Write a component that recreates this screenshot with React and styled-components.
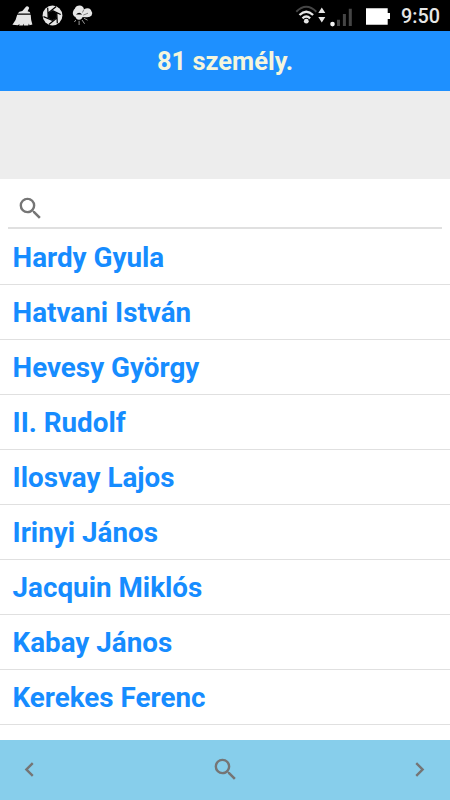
import React, { useState } from 'react';
import styled, { createGlobalStyle } from 'styled-components';
import { MdSearch, MdChevronLeft, MdChevronRight } from 'react-icons/md';

const GlobalStyle = createGlobalStyle`
    * {
        box-sizing: border-box;
    }
    body {
        margin: 0;
        background: #fff;
        font-family: Roboto, "Liberation Sans", sans-serif;
    }
`;

const Screen = styled.div`
    display: flex;
    flex-direction: column;
    height: 800px;
    width: 450px;
    overflow: hidden;
    background: #fff;
`;

// Android status bar
const StatusBar = styled.div`
    display: flex;
    flex: none;
    align-items: center;
    justify-content: space-between;
    height: 31px;
    background: #000;
`;

const StatusIcons = styled.svg`
    display: block;
    flex: none;
`;

const StatusRight = styled.div`
    display: flex;
    align-items: center;
    padding-right: 10px;
`;

const Clock = styled.span`
    width: 39px;
    margin-left: 11px;
    color: #e6e6e6;
    font-size: 19.8px;
    font-weight: 500;
    line-height: 31px;
    padding-top: 2px;
    white-space: nowrap;
`;

const Header = styled.h1`
    flex: none;
    height: 60px;
    margin: 0;
    background: dodgerblue;
    color: beige;
    font-size: 25.5px;
    font-weight: 700;
    line-height: 60px;
    text-align: center;
`;

const Banner = styled.div`
    flex: none;
    height: 88px;
    background: #ededed;
`;

const SearchBox = styled.label`
    display: flex;
    flex: none;
    align-items: center;
    height: 50px;
    margin: 0 8px;
    padding: 11px 7px 0 8px;
    border-bottom: 2px solid #e0e0e0;
    color: #757575;
`;

const SearchInput = styled.input`
    flex: 1;
    margin-left: 8px;
    border: none;
    outline: none;
    background: transparent;
    font: 400 20px Roboto, sans-serif;
`;

const List = styled.ul`
    flex: 1;
    min-height: 0;
    margin: 0;
    padding: 1px 0 0;
    overflow: hidden;
    list-style: none;
`;

const Person = styled.li`
    height: 55px;
    padding-left: 12.5px;
    border-bottom: 1px solid #e0e0e0;
    color: #168cff;
    font-size: 27.8px;
    font-weight: 700;
    line-height: 56px;
`;

const BottomBar = styled.nav`
    display: flex;
    flex: none;
    align-items: center;
    justify-content: space-between;
    height: 60px;
    padding: 0 15.6px 1px 15.4px;
    background: skyblue;
`;

const NavButton = styled.button`
    display: flex;
    padding: 0;
    border: none;
    background: none;
    color: #757575;

    &:nth-child(2) {
        padding-left: 1.2px;
    }
`;

const people = [
    'Hardy Gyula',
    'Hatvani István',
    'Hevesy György',
    'II. Rudolf',
    'Ilosvay Lajos',
    'Irinyi János',
    'Jacquin Miklós',
    'Kabay János',
    'Kerekes Ferenc',
];

// broom, camera shutter, weather
const Notifications = () => (
    <StatusIcons width="110" height="31" viewBox="0 0 110 31" fill="#e6e6e6">
        <path d="M26.2 6.5Q28.5 5.8 29.2 8L27.6 11.2Q30.4 11.7 30.4 13.6H17.7Q18.8 11.4 22.3 11Z" />
        <path d="M17.2 14.8H30.7Q30.8 20.2 32.4 24.4L29.5 25.3L28.9 23.4L28.3 25.5H23.7L24.1 23.6L22.7 25.5H19.1L19.6 24L17.8 25.3L12.4 24.7Q16.3 20.3 17.2 14.8Z" />
        <circle cx="52.5" cy="15.5" r="9.9" />
        <path d="M52.5 10.6L56.8 13L56.8 18L52.5 20.5L48.2 18L48.2 13Z" fill="#000" />
        <path d="M52.5 10.6L60.7 14.5M56.8 13L57.3 23.2M56.8 18L48.9 24.5M52.5 20.5L43.5 16.6M48.2 18L47.7 7.8M48.2 13L56.2 6.5" stroke="#000" strokeWidth="1.2" />
        <path d="M74.8 16.7Q72.2 14.8 73 11.7Q73.8 9.2 74.8 8.7Q76 5.5 79.8 5.6Q83 5.8 84 9.2Q88.3 7.3 90.8 9.7Q93 12.6 91.6 15.4Q90.2 17.4 86.4 17.2Z" />
        <path d="M76 14.6Q79.2 11 82.2 14.6Z" fill="#000" />
        <path d="M75.2 15.8H82.8Q82.3 19.8 79 19.8Q75.8 19.8 75.2 15.8Z" />
        <path d="M75.8 20L74.4 22M79.1 20.8V25M82 20L84.6 23.8M84 18.3L87.6 20.2" stroke="#999" strokeWidth="1" />
        <path d="M83.8 9.5L82.5 12.5M83.3 15.1L88 13.2" stroke="#555" strokeWidth=".7" />
    </StatusIcons>
);

// wifi with traffic arrows, mobile signal, battery
const Connectivity = () => (
    <StatusIcons width="96" height="31" viewBox="294 0 96 31" fill="none">
        <path d="M296.3 11.7Q306.3 1.8 316.3 11.7" stroke="#454545" strokeWidth="2" />
        <path d="M299.5 15Q306.3 8.4 313.1 15M302.5 18.3Q306.3 14.7 310.1 18.3" stroke="#e6e6e6" strokeWidth="2.3" />
        <circle cx="306.3" cy="21.2" r="2.4" fill="#e6e6e6" />
        <path d="M318.3 13L321.8 7.5L325.3 13ZM318.3 17L321.8 22.5L325.3 17Z" fill="#e6e6e6" />
        <circle cx="332.5" cy="24.1" r="2.3" fill="#f4f4f4" />
        <path d="M338.5 26V19.7M344.4 26V14M350.3 26V8.7" stroke="#454545" strokeWidth="3" strokeLinecap="butt" />
        <path d="M366 8.2H387.7V13H390V19H387.7V24.8H366Z" fill="#fff" />
    </StatusIcons>
);

const App = () => {
    const [query, setQuery] = useState('');

    const visible = people.filter((name) => name.toLowerCase().includes(query.toLowerCase()));

    return (
        <Screen>
            <GlobalStyle />
            <StatusBar>
                <Notifications />
                <StatusRight>
                    <Connectivity />
                    <Clock>9:50</Clock>
                </StatusRight>
            </StatusBar>
            <Header>81 személy.</Header>
            <Banner />
            <SearchBox>
                <MdSearch size={29} />
                <SearchInput value={query} onChange={(e) => setQuery(e.target.value)} />
            </SearchBox>
            <List>
                {visible.map((name) => (
                    <Person key={name}>{name}</Person>
                ))}
            </List>
            <BottomBar>
                <NavButton><MdChevronLeft size={29} /></NavButton>
                <NavButton><MdSearch size={29} /></NavButton>
                <NavButton><MdChevronRight size={29} /></NavButton>
            </BottomBar>
        </Screen>
    );
};

export default App;
